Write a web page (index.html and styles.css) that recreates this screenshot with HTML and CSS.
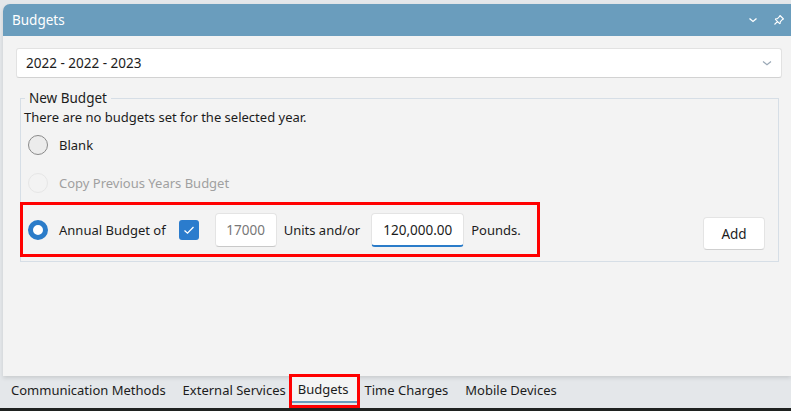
FILE: index.html
```html
<!DOCTYPE html>
<html>
<head>
<meta charset="utf-8">
<link rel="stylesheet" href="styles.css">
</head>
<body>
<div class="screen">
  <div class="panel">
    <div class="header">
      <span class="title">Budgets</span>
      <div class="hicons">
        <svg class="hicon" width="12" height="12" viewBox="0 0 12 12"><path d="M2.5 4.5 L6 7.5 L9.5 4.5" fill="none" stroke="#fff" stroke-width="1.3"/></svg>
        <svg class="hicon" width="12" height="12" viewBox="0 0 12 12"><path d="M7 1.5 L10.5 5 L9.3 5.6 L7.2 7.8 L7.3 9.3 L6.6 9.6 L2.4 5.4 L2.7 4.7 L4.2 4.8 L6.4 2.7 Z M4.4 7.6 L1.5 10.5" fill="none" stroke="#fff" stroke-width="1.1" stroke-linejoin="round"/></svg>
      </div>
    </div>
    <div class="body">
      <div class="select">
        <span>2022 - 2022 - 2023</span>
        <svg width="12" height="12" viewBox="0 0 12 12"><path d="M2 4.5 L6 7.8 L10 4.5" fill="none" stroke="#9aa8b6" stroke-width="1.2"/></svg>
      </div>
      <fieldset class="group">
        <legend>New Budget</legend>
        <div class="note">There are no budgets set for the selected year.</div>
        <div class="opt"><span class="radio"></span><span>Blank</span></div>
        <div class="opt disabled"><span class="radio"></span><span>Copy Previous Years Budget</span></div>
        <div class="lastrow">
          <div class="annual">
            <span class="radio on"></span>
            <span class="lbl">Annual Budget of</span>
            <span class="check"><svg width="20" height="20" viewBox="0 0 20 20"><path d="M5.5 10.5 L8.5 13.2 L14.5 7" fill="none" stroke="#fff" stroke-width="1.3"/></svg></span>
            <span class="input units">17000</span>
            <span class="lbl">Units and/or</span>
            <span class="input pounds">120,000.00</span>
            <span class="lbl">Pounds.</span>
          </div>
          <button class="add">Add</button>
        </div>
      </fieldset>
    </div>
  </div>
  <div class="tabs">
    <span class="tab">Communication Methods</span>
    <span class="tab">External Services</span>
    <span class="tab active"><span class="tabin">Budgets</span></span>
    <span class="tab">Time Charges</span>
    <span class="tab">Mobile Devices</span>
  </div>
  <div class="bottom"></div>
</div>
</body>
</html>
```
FILE: styles.css
```css
html, body {
  margin: 0;
  padding: 0;
}
body {
  width: 791px;
  height: 411px;
  overflow: hidden;
  background: #e4e7ea;
  font-family: "Noto Sans", "Open Sans", sans-serif;
  font-size: 13px;
  color: #1c1c1c;
}
.screen {
  display: flex;
  flex-direction: column;
  height: 411px;
  padding-top: 4px;
  box-sizing: border-box;
}
.panel {
  margin-left: 3px;
  height: 372px;
  display: flex;
  flex-direction: column;
  border-top-left-radius: 7px;
  overflow: hidden;
  box-shadow: 0 2px 4px rgba(0,0,0,0.12);
}
.header {
  height: 32px;
  flex: none;
  background: #6a9dbd;
  display: flex;
  align-items: center;
  justify-content: space-between;
  padding-left: 9px;
  padding-right: 6px;
}
.title {
  color: #fff;
  font-size: 13.5px;
}
.hicons {
  display: flex;
  gap: 14px;
  align-items: center;
}
.hicon { display: block; }
.body {
  flex: 1;
  background: #f3f3f3;
  padding: 12px 9px 0 13px;
}
.select {
  height: 30px;
  box-sizing: border-box;
  background: #fff;
  border: 1px solid #e2e2e2;
  border-bottom-color: #d2d2d2;
  border-radius: 3px;
  display: flex;
  align-items: center;
  justify-content: space-between;
  padding: 0 8px 0 9px;
  font-size: 13.5px;
}
.group {
  margin: 12px 3px 0 4px;
  padding: 0 0 0 3px;
  border: 1px solid #d6dee6;
  height: 172px;
  box-sizing: border-box;
}
.group legend {
  padding: 0 4px;
  margin-left: 1px;
  font-size: 13.5px;
  line-height: 16px;
}
.note {
  margin-top: 2px;
  line-height: 18px;
}
.opt {
  display: flex;
  align-items: center;
  gap: 11px;
  height: 38px;
  padding-left: 4px;
}
.radio {
  width: 20px;
  height: 20px;
  box-sizing: border-box;
  border-radius: 50%;
  border: 1px solid #8a8a8a;
  background: #ececec;
  flex: none;
}
.disabled { color: #a0a0a0; }
.disabled .radio {
  border-color: #e6e6e6;
  background: #f3f3f3;
}
.radio.on {
  border: 5px solid #2b7cc9;
  background: #fff;
}
.lastrow {
  display: flex;
  align-items: center;
  justify-content: space-between;
  margin-left: -4px;
  padding-right: 13px;
}
.annual {
  display: flex;
  align-items: center;
  height: 55px;
  box-sizing: border-box;
  border: 3px solid #ff0000;
  width: 520px;
  padding-left: 5px;
}
.annual .radio { margin-right: 11px; }
.lbl { white-space: nowrap; }
.check {
  width: 20px;
  height: 20px;
  background: #2b7ccd;
  border-radius: 3px;
  margin-left: 13px;
  margin-right: 16px;
  display: block;
}
.check svg { display: block; }
.input {
  height: 34px;
  box-sizing: border-box;
  background: #fff;
  border: 1px solid #e4e4e4;
  border-bottom-color: #c9c9c9;
  border-radius: 4px;
  display: flex;
  align-items: center;
  justify-content: center;
  font-size: 13.5px;
}
.units {
  width: 62px;
  color: #787878;
  margin-right: 7px;
}
.pounds {
  width: 93px;
  margin-left: 11px;
  margin-right: 7px;
  border-bottom: 2px solid #2b7cc9;
  padding-top: 1px;
}
.add {
  width: 62px;
  height: 33px;
  background: #fff;
  border: 1px solid #e4e4e4;
  border-bottom-color: #cfcfcf;
  border-radius: 4px;
  font-family: inherit;
  font-size: 13.5px;
  color: #1c1c1c;
  margin-top: 8px;
}
.tabs {
  display: flex;
  height: 32px;
  align-items: center;
  padding-left: 11px;
  padding-bottom: 4px;
  box-sizing: border-box;
}
.tab {
  margin-right: 17px;
  color: #1c1c1c;
  white-space: nowrap;
}
.tab.active {
  margin-left: -14px;
  margin-right: 5px;
  border: 3px solid #ff0000;
  height: 34px;
  box-sizing: border-box;
  display: flex;
  padding: 0;
  margin-top: 1px;
}
.tabin {
  background: #f4f4f4;
  padding: 0 8px 0 6px;
  display: flex;
  align-items: center;
  border-bottom: 2px solid #6a9dbd;
  margin: 0 0 2px 0;
}
.bottom {
  flex: 1;
  background: #1f2220;
}
```
